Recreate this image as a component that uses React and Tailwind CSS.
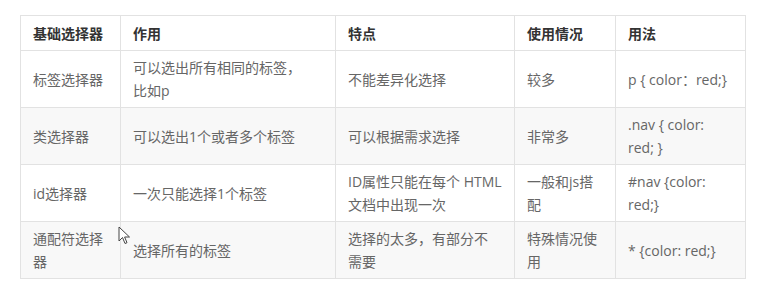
import React from "react";

const rows = [
  [["标签选择器"], ["可以选出所有相同的标签，", "比如p"], ["不能差异化选择"], ["较多"], ["p { color：red;}"]],
  [["类选择器"], ["可以选出1个或者多个标签"], ["可以根据需求选择"], ["非常多"], [".nav { color:", "red; }"]],
  [["id选择器"], ["一次只能选择1个标签"], ["ID属性只能在每个 HTML", "文档中出现一次"], ["一般和js搭", "配"], ["#nav {color:", "red;}"]],
  [["通配符选择", "器"], ["选择所有的标签"], ["选择的太多，有部分不", "需要"], ["特殊情况使", "用"], ["* {color: red;}"]],
];

const widths = ["w-[100px]", "w-[215px]", "w-[179px]", "w-[101px]", "w-[130px]"];
const heads = ["基础选择器", "作用", "特点", "使用情况", "用法"];

function Lines({ lines }) {
  return lines.map((l, i) => (
    <React.Fragment key={i}>
      {i > 0 && <br />}
      {l}
    </React.Fragment>
  ));
}

export default function App() {
  return (
    <div
      className="relative w-[763px] h-[293px] bg-white pt-[15px] pl-[20px]"
      style={{ fontFamily: '"Open Sans", "Noto Sans CJK SC", sans-serif' }}
    >
      <table className="border-collapse table-fixed w-[725px] text-[14px] leading-[23px]">
        <thead>
          <tr className="h-[35px] bg-white">
            {heads.map((h, i) => (
              <th
                key={i}
                className={`${widths[i]} border border-[#e2e2e2] px-[12px] text-left font-bold text-[#333] whitespace-nowrap`}
              >
                {h}
              </th>
            ))}
          </tr>
        </thead>
        <tbody>
          {rows.map((r, ri) => (
            <tr key={ri} className={`h-[57px] ${ri % 2 === 1 ? "bg-[#f8f8f8]" : "bg-white"}`}>
              {r.map((c, ci) => (
                <td
                  key={ci}
                  className="border border-[#e2e2e2] px-[12px] align-middle text-[#666] whitespace-nowrap"
                >
                  <Lines lines={c} />
                </td>
              ))}
            </tr>
          ))}
        </tbody>
      </table>
      <svg
        className="absolute left-[118px] top-[226px]"
        width="13"
        height="19"
        viewBox="0 0 13 19"
      >
        <path
          d="M1 1 L1 15 L4.5 11.5 L7 17.5 L9 16.7 L6.6 11 L11.5 11 Z"
          fill="#fff"
          stroke="#444"
          strokeWidth="1"
          strokeLinejoin="round"
        />
      </svg>
    </div>
  );
}
